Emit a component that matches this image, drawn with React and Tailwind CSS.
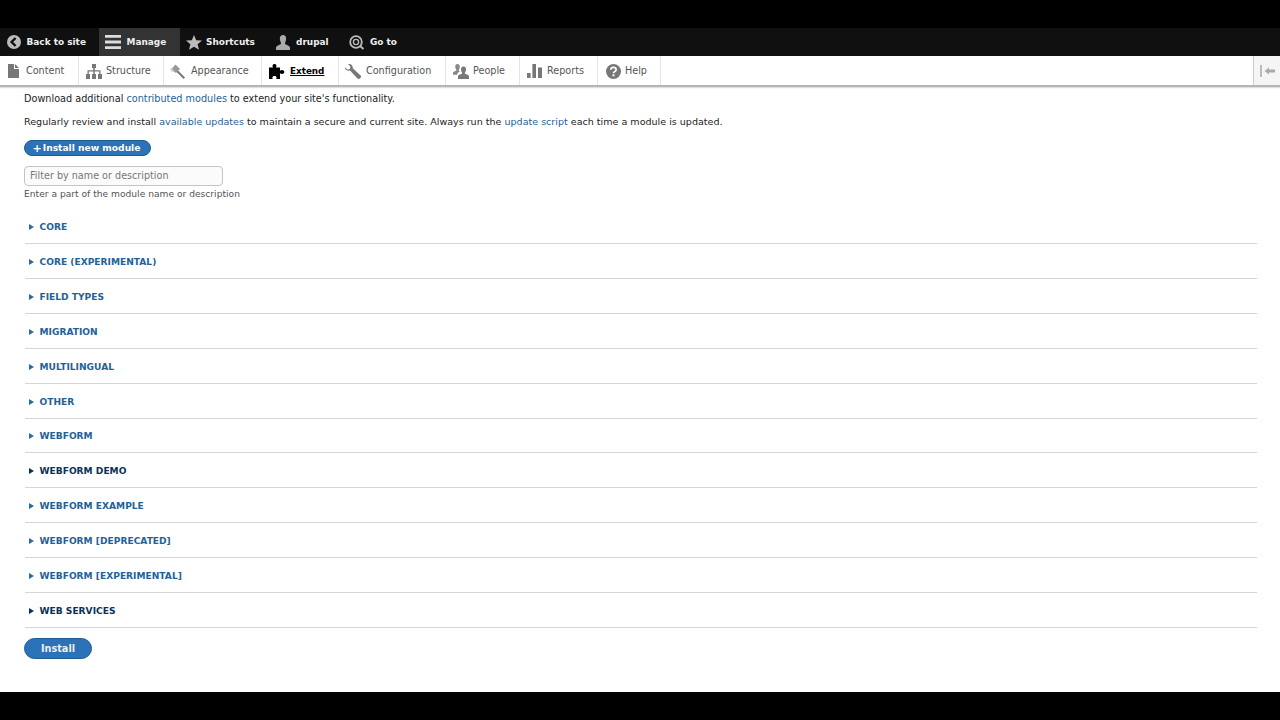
import React from "react";

const Back = () => (
  <svg width="14" height="14" viewBox="0 0 14 14" className="shrink-0"><circle cx="7" cy="7" r="7" fill="#bbb" /><path d="M8.6 3 L4.6 7 L8.6 11" fill="none" stroke="#111" strokeWidth="2.4" /></svg>
);
const Burger = () => (
  <svg width="16" height="14" viewBox="0 0 16 14" className="shrink-0"><path d="M0 0h16v2.8H0zM0 5.6h16v2.8H0zM0 11.2h16V14H0z" fill="#ddd" /></svg>
);
const Star = () => (
  <svg width="16" height="15" viewBox="0 0 16 15" className="shrink-0"><path d="M8 0l2.2 5.2 5.8.4-4.4 3.6 1.4 5.6L8 11.8 3 14.8l1.4-5.6L0 5.6l5.8-.4z" fill="#bbb" /></svg>
);
const Person = () => (
  <svg width="14" height="15" viewBox="0 0 14 15" className="shrink-0"><path d="M7 0c2 0 3.2 1.5 3.2 3.6S9 7.4 9 8.4c0 1.4 5 1.8 5 4.4V15H0v-2.2c0-2.6 5-3 5-4.4 0-1-1.2-2.7-1.2-4.8S5 0 7 0z" fill="#aaa" /></svg>
);
const GoTo = () => (
  <svg width="16" height="15" viewBox="0 0 16 15" className="shrink-0"><circle cx="7" cy="7" r="5.8" fill="none" stroke="#bbb" strokeWidth="1.8" /><circle cx="7" cy="7" r="2.6" fill="none" stroke="#bbb" strokeWidth="1.4" /><path d="M11 11l3.5 3" stroke="#bbb" strokeWidth="2" /></svg>
);
const Doc = () => (
  <svg width="11" height="14" viewBox="0 0 11 14" className="shrink-0"><path d="M0 0h6v5h5v9H0zM7 0l4 4H7z" fill="#777" /></svg>
);
const Tree = () => (
  <svg width="16" height="15" viewBox="0 0 16 15" className="shrink-0"><path d="M6 0h4v4H8.8v2.2H14.5V10H16v5h-4v-5h1.2V7.6H8.7V10H10v5H6v-5h1.3V7.6H2.8V10H4v5H0v-5h1.5V6.2h5.7V4H6z" fill="#777" /></svg>
);
const Brush = () => (
  <svg width="16" height="15" viewBox="0 0 16 15" className="shrink-0"><path d="M5.5 0.5L10 5 6 9 1 5.5z" fill="#999" /><path d="M8 6.5l7 7-1.4 1.4-7-7z" fill="#777" /><path d="M0 5l2 -1 2 3-2 1z" fill="#ccc" /></svg>
);
const Puzzle = () => (
  <svg width="16" height="15" viewBox="0 0 16 15" className="shrink-0"><path d="M0 3.5h4C3.2 2.4 3.4 0 5.5 0s2.3 2.4 1.5 3.5h4v3.2c1-.8 3-.9 4 .4.4.6.4 1.3 0 1.9-1 1.2-3 1.2-4 .3V15H7.2c.8-1 .6-3-1.7-3s-2.5 2-1.7 3H0z" fill="#000" /></svg>
);
const Wrench = () => (
  <svg width="16" height="15" viewBox="0 0 16 15" className="shrink-0"><path d="M0 3.4L2.8 5.8 5 4.8 5.4 2.4 3 0C5.2-.6 8 1 7.8 4.2L15.6 11.4C16.4 12.4 16 13.8 15 14.5 14 15.2 13 15 12.2 14.2L5 6.6C2 7.2-.4 5.6 0 3.4z" fill="#777" /></svg>
);
const People = () => (
  <svg width="16" height="15" viewBox="0 0 16 15" className="shrink-0"><path d="M4.5 0C6 0 6.8 1.2 6.8 2.8S5.8 5.4 5.8 6.2c0 .6.8.8 1.4 1-1.4.8-3 1.4-3 3.6H0V9C0 7.2 3.4 7.2 3.4 6.2 3.4 5.4 2.2 4.4 2.2 2.8S3 0 4.5 0z" fill="#888" /><path d="M10.5 2.5c1.6 0 2.5 1.2 2.5 3s-1.2 3-1.2 3.8c0 1 4.2 1.2 4.2 3.2V15H5v-2.5c0-2 4.2-2.2 4.2-3.2 0-.8-1.2-2-1.2-3.8s.9-3 2.5-3z" fill="#777" /></svg>
);
const Bars = () => (
  <svg width="15" height="14" viewBox="0 0 15 14" className="shrink-0"><path d="M0 9h3.6v5H0zM5.4 0H9v14H5.4zM11 3.5h4V14h-4z" fill="#777" /></svg>
);
const Help = () => (
  <svg width="15" height="15" viewBox="0 0 15 15" className="shrink-0"><circle cx="7.5" cy="7.5" r="7.5" fill="#777" /><path d="M4.9 5.7c0-3 5.2-3 5.2 0 0 2-2.6 1.9-2.6 3.6" fill="none" stroke="#fff" strokeWidth="1.7" /><rect x="6.5" y="10.3" width="2" height="2" fill="#fff" /></svg>
);
const Collapse = () => (
  <svg width="15" height="12" viewBox="0 0 15 12"><path d="M0 0h2v12H0z" fill="#bbb" /><path d="M4.5 6L9 2.5V4.5h6v3H9v2z" fill="#aaa" /></svg>
);

const bar = [
  { w: "w-[99px]", pl: "pl-[7px]", gap: "gap-[5.5px]", icon: <Back />, t: "Back to site" },
  { w: "w-[81px]", pl: "pl-[6px]", gap: "gap-[5.5px]", icon: <Burger />, t: "Manage", active: true },
  { w: "w-[96px]", pl: "pl-[6px]", gap: "gap-[4px]", icon: <Star />, t: "Shortcuts" },
  { w: "w-[73px]", pl: "pl-0", gap: "gap-[6px]", icon: <Person />, t: "drupal" },
  { w: "w-[60px]", pl: "pl-0", gap: "gap-[5px]", icon: <GoTo />, t: "Go to" },
];

const tray = [
  { w: "w-[79px]", pl: "pl-[8px]", gap: "gap-[7px]", icon: <Doc />, t: "Content" },
  { w: "w-[85px]", pl: "pl-[7px]", gap: "gap-[4px]", icon: <Tree />, t: "Structure" },
  { w: "w-[98px]", pl: "pl-[6px]", gap: "gap-[5px]", icon: <Brush />, t: "Appearance" },
  { w: "w-[77px]", pl: "pl-[7px]", gap: "gap-[5px]", icon: <Puzzle />, t: "Extend", active: true },
  { w: "w-[107px]", pl: "pl-[6px]", gap: "gap-[5px]", icon: <Wrench />, t: "Configuration" },
  { w: "w-[74px]", pl: "pl-[7px]", gap: "gap-[4px]", icon: <People />, t: "People" },
  { w: "w-[78px]", pl: "pl-[7px]", gap: "gap-[5px]", icon: <Bars />, t: "Reports" },
  { w: "w-[63px]", pl: "pl-[8px]", gap: "gap-[4px]", icon: <Help />, t: "Help" },
];

const rows = [
  ["CORE"],
  ["CORE (EXPERIMENTAL)"],
  ["FIELD TYPES"],
  ["MIGRATION"],
  ["MULTILINGUAL"],
  ["OTHER"],
  ["WEBFORM"],
  ["WEBFORM DEMO", true],
  ["WEBFORM EXAMPLE"],
  ["WEBFORM [DEPRECATED]"],
  ["WEBFORM [EXPERIMENTAL]"],
  ["WEB SERVICES", true],
];

const A = ({ children }) => <a className="text-[#1f6297]">{children}</a>;

export default function App() {
  return (
    <div className="w-[1280px] h-[720px] overflow-hidden flex flex-col bg-white text-[9.55px] leading-[14px] text-[#232323] font-['DejaVu_Sans',sans-serif]">
      <div className="h-7 shrink-0 bg-black" />
      <div className="h-7 shrink-0 bg-[#101010] flex">
        {bar.map((b) => (
          <div key={b.t} className={`${b.w} ${b.pl} ${b.gap} flex items-center font-bold text-[8.95px] text-[#eeeeee] ${b.active ? "bg-[#333333]" : ""}`}>
            {b.icon}
            <span>{b.t}</span>
          </div>
        ))}
      </div>
      <div className="h-[31px] shrink-0 bg-white flex border-b-2 border-[#b5b5b5] relative z-10 shadow-[0_1px_1px_rgba(0,0,0,0.12)]">
        {tray.map((b) => (
          <div key={b.t} className={`${b.w} ${b.pl} ${b.gap} pt-[1px] flex items-center border-r border-[#e5e5e5] ${b.active ? "text-black font-bold underline text-[8.8px]" : "text-[#555555] text-[9.65px]"}`}>
            {b.icon}
            <span>{b.t}</span>
          </div>
        ))}
        <div className="ml-auto w-[27px] h-full border-l border-[#cccccc] bg-[#f5f5f5] flex items-center justify-center">
          <Collapse />
        </div>
      </div>
      <div className="flex-1 px-6 pt-[5px] min-h-0">
        <p className="h-[14px] text-[9.7px]">Download additional <A>contributed modules</A> to extend your site's functionality.</p>
        <p className="mt-[9px] h-[14px]">Regularly review and install <A>available updates</A> to maintain a secure and current site. Always run the <A>update script</A> each time a module is updated.</p>
        <div className="mt-[11px] h-4 w-[127px] pr-[2px] rounded-full bg-[#2b72b8] border border-[#1e5c90] flex items-center justify-center font-bold text-[9.15px] text-white gap-[1px]">
          <span className="text-[11px] leading-none">+</span>
          <span>Install new module</span>
        </div>
        <div className="mt-[10px] w-[199px] h-5 rounded-sm border border-[#c4c4c4] bg-[#fbfbfb] pl-[5px] flex items-center text-[9.65px] text-[#777777]">
          Filter by name or description
        </div>
        <p className="mt-[1px] text-[9.15px] text-[#555555]">Enter a part of the module name or description</p>
        <div className="mt-[8.5px] ml-px mr-[-1px]">
          {rows.map(([t, dark]) => (
            <div key={t} className="h-[34.85px] border-b border-[#d5d5d5] flex items-center pl-1 gap-[5.5px] pt-[2px]">
              <span className={`w-0 h-0 border-y-[3px] border-y-transparent border-l-[5.5px] ${dark ? "border-l-[#0f2f4f]" : "border-l-[#2a6ba5]"}`} />
              <span className={`font-semibold text-[9.1px] ${dark ? "text-[#0b3157]" : "text-[#1f6297]"}`}>{t}</span>
            </div>
          ))}
        </div>
        <div className="mt-[10px] w-[68px] h-[21px] pt-[1px] rounded-full bg-[#2b72b8] border border-[#1e5c90] flex items-center justify-center font-bold text-[9.7px] text-[#eeeeee]">Install</div>
      </div>
      <div className="h-7 shrink-0 bg-black" />
    </div>
  );
}
